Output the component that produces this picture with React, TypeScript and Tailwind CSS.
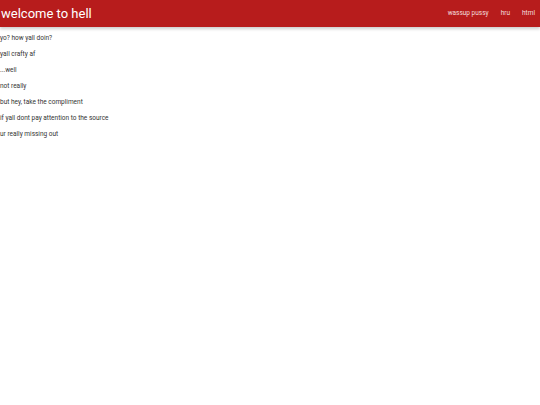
export default function App() {
  const lines = [
    "yo? how yall doin?",
    "yall crafty af",
    "...well",
    "not really",
    "but hey, take the compliment",
    "if yall dont pay attention to the source",
    "ur really missing out",
  ];
  return (
    <div className="min-h-[405px] bg-white" style={{ fontFamily: "Roboto, sans-serif" }}>
      <nav className="flex h-[27px] items-center justify-between bg-[#b71c1c] shadow-[0_2px_3px_rgba(0,0,0,0.2)]">
        <span className="pl-px text-[13px] leading-none text-white">welcome to hell</span>
        <ul className="flex items-center pr-[5px] text-[6.5px] text-[#f3dede]">
          <li className="px-[6px]">wassup pussy</li>
          <li className="px-[6px]">hru</li>
          <li className="pl-[6px]">html</li>
        </ul>
      </nav>
      <div className="flex flex-col gap-[9px] pt-[8px] text-[6.5px] leading-[7px] text-[#333]">
        {lines.map((l) => (
          <p key={l}>{l}</p>
        ))}
      </div>
    </div>
  );
}
